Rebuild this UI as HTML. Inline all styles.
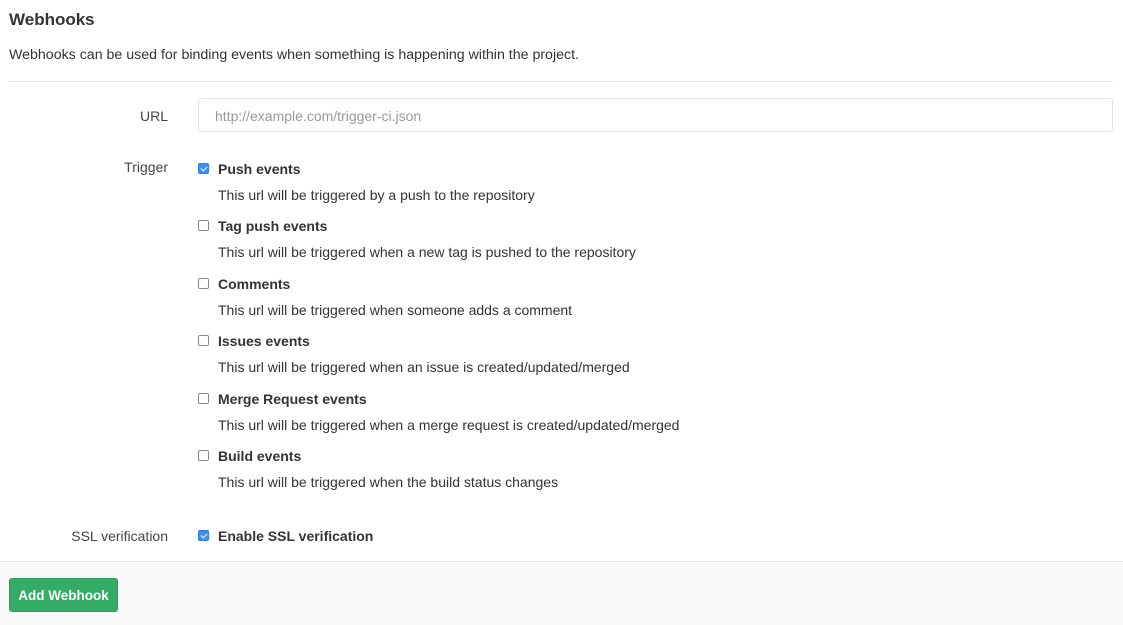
<!DOCTYPE html>
<html><head><style>
body{margin:0;width:1123px;height:624px;background:#fff;font-family:"Liberation Sans",sans-serif;color:#2e2e2e;position:relative;overflow:hidden}
.a{position:absolute;white-space:nowrap}
h3{position:absolute;left:9px;top:10px;margin:0;font-size:17px;font-weight:bold;color:#333}
.desc{left:9px;top:47px;font-size:14.2px;color:#333}
.hr{position:absolute;left:9px;width:1104px;top:81px;height:1px;background:#e8e8e8}
.lbl{right:955px;font-size:14px;color:#444;text-align:right}
.inp{position:absolute;left:198px;top:98px;width:915px;height:34px;border:1px solid #e3e3e3;border-radius:3px;box-sizing:border-box}
.ph{left:215px;top:108px;font-size:14px;color:#999}
.cb{position:absolute;left:198px;width:11px;height:11px;border:1px solid #8a8a8a;border-radius:2px;background:#fff;box-sizing:border-box}
.cb.on{background:#3b8ff0;border-color:#2f80e0}
.cb.on::after{content:"";position:absolute;left:3px;top:1px;width:3px;height:5px;border:solid #fff;border-width:0 1.5px 1.5px 0;transform:rotate(45deg)}
.t{left:218px;font-size:14px;font-weight:bold;color:#333}
.d{left:218px;font-size:14px;color:#333}
.foot{position:absolute;left:0;top:561px;width:1123px;height:63px;background:#fafafa;border-top:1px solid #e5e5e5}
.btn{position:absolute;left:9px;top:578px;width:109px;height:34px;background:#33ad65;border:1px solid #2ea05c;border-radius:3px;box-sizing:border-box;color:#fff;font-weight:bold;font-size:13.5px;line-height:33px;text-align:center}
</style></head><body>
<h3>Webhooks</h3>
<div class="a desc">Webhooks can be used for binding events when something is happening within the project.</div>
<div class="hr"></div>
<div class="a lbl" style="top:108px">URL</div>
<div class="inp"></div>
<div class="a ph">http://example.com/trigger-ci.json</div>
<div class="a lbl" style="top:159px">Trigger</div>

<div class="cb on" style="top:163px"></div><div class="a t" style="top:161px">Push events</div><div class="a d" style="top:187px">This url will be triggered by a push to the repository</div>
<div class="cb" style="top:220px"></div><div class="a t" style="top:218px">Tag push events</div><div class="a d" style="top:244px">This url will be triggered when a new tag is pushed to the repository</div>
<div class="cb" style="top:278px"></div><div class="a t" style="top:276px">Comments</div><div class="a d" style="top:302px">This url will be triggered when someone adds a comment</div>
<div class="cb" style="top:335px"></div><div class="a t" style="top:333px">Issues events</div><div class="a d" style="top:359px">This url will be triggered when an issue is created/updated/merged</div>
<div class="cb" style="top:393px"></div><div class="a t" style="top:391px">Merge Request events</div><div class="a d" style="top:417px">This url will be triggered when a merge request is created/updated/merged</div>
<div class="cb" style="top:450px"></div><div class="a t" style="top:448px">Build events</div><div class="a d" style="top:474px">This url will be triggered when the build status changes</div>

<div class="a lbl" style="top:528px">SSL verification</div>
<div class="cb on" style="top:530px"></div><div class="a t" style="top:528px">Enable SSL verification</div>
<div class="foot"></div>
<div class="btn">Add Webhook</div>
</body></html>
